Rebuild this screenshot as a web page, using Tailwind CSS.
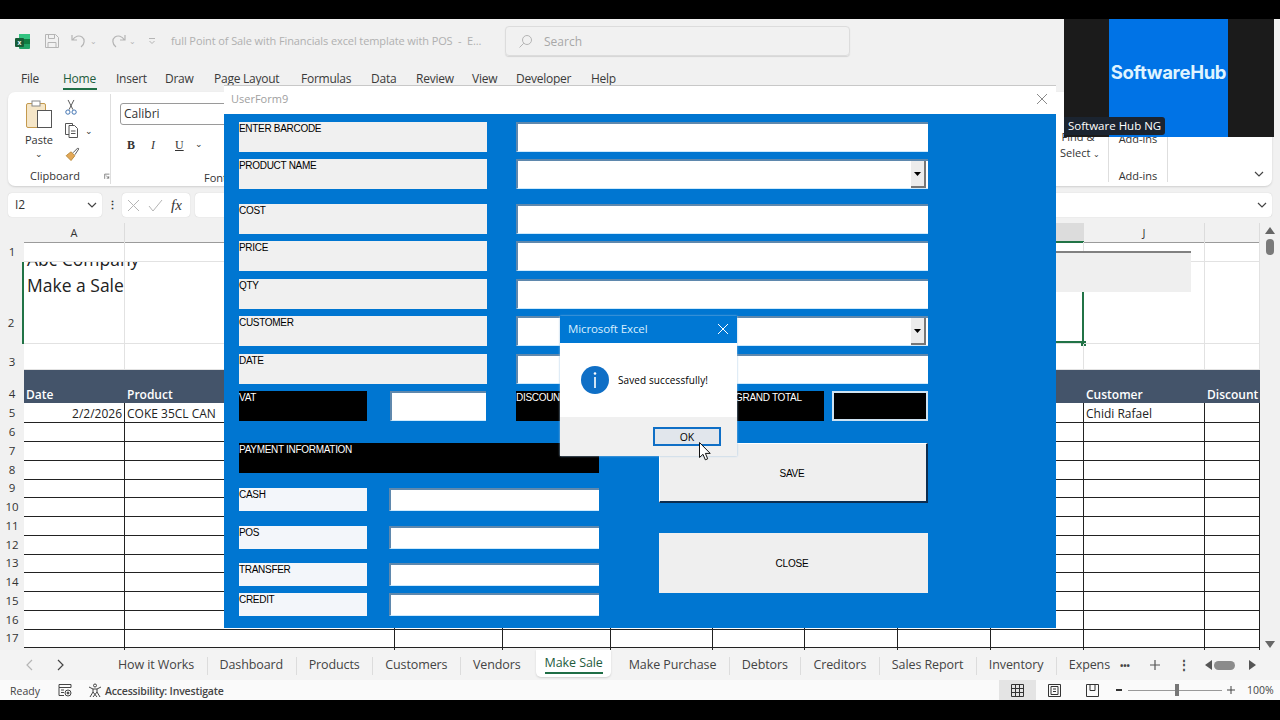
<!DOCTYPE html>
<html lang="en">
<head>
  <meta charset="UTF-8" />
  <title>Make a Sale - Excel</title>
  <script src="https://cdn.jsdelivr.net/npm/@tailwindcss/browser@4"></script>
</head>
<body class="bg-black w-[1280px] h-[720px] overflow-hidden relative font-['Open_Sans',sans-serif] text-[#333]">

  <!-- excel window -->
  <div class="absolute top-[19px] left-0 w-[1280px] h-[681px] bg-[#f1f1f1] flex flex-col">

    <!-- title bar -->
    <div class="h-[41px] flex items-center pl-[14px] pt-[3px] shrink-0">
      <svg class="w-[17px] h-[17px]" viewBox="0 0 17 17"><rect x="5" y="1" width="11" height="15" rx="1" fill="#21a366"/><rect x="5" y="1" width="11" height="5" fill="#33c481"/><rect x="10" y="6" width="6" height="5" fill="#107c41"/><rect x="1" y="5" width="9" height="9" rx="1" fill="#185c37"/><text x="5.5" y="12" font-size="7" font-weight="700" fill="#fff" text-anchor="middle" font-family="Liberation Sans">x</text></svg>
      <svg class="w-[16px] h-[16px] ml-[13px] text-[#b5b5b5]" viewBox="0 0 16 16" fill="none" stroke="currentColor"><path d="M1.5 1.5h10l3 3v10h-13zM4.5 1.5v4h6v-4M4 14.5v-5h8v5"/></svg>
      <svg class="w-[18px] h-[16px] ml-[10px] text-[#b5b5b5]" viewBox="0 0 18 16" fill="none" stroke="currentColor" stroke-width="1.2"><path d="M2 2v5h5M2.5 7C5 3 9 2 12 4c3 2 3 7-1 10"/></svg>
      <span class="text-[8px] ml-[2px] text-[#b5b5b5]">⌄</span>
      <svg class="w-[18px] h-[16px] ml-[12px] text-[#b5b5b5]" viewBox="0 0 18 16" fill="none" stroke="currentColor" stroke-width="1.2"><path d="M16 2v5h-5M15.500 7C13 3 9 2 6 4c-3 2-3 7 1 10"/></svg>
      <span class="text-[8px] ml-[2px] text-[#b5b5b5]">⌄</span>
      <svg class="w-[8px] h-[8px] ml-[12px] text-[#b5b5b5]" viewBox="0 0 8 8" fill="none" stroke="currentColor"><path d="M1 1.500h6M1.500 4l2.500 2.500L6.500 4"/></svg>
      <span class="ml-[15px] w-[330px] text-[11px] text-[#b0b0b0] whitespace-nowrap tracking-[-0.1px]">full Point of Sale with Financials excel template with POS&nbsp; -&nbsp; E...</span>
      <div class="ml-[4px] w-[345px] h-[30px] border border-[#dcdcdc] rounded-[4px] flex items-center pl-[12px] shadow-[0_1px_1px_#d4d4d4]">
        <svg class="w-[15px] h-[15px] text-[#b5b5b5]" viewBox="0 0 15 15" fill="none" stroke="currentColor"><circle cx="9" cy="6" r="4.500"/><path d="M5.800 9.200L1.500 13.500"/></svg>
        <span class="ml-[11px] mt-[1px] text-[12px] text-[#a8a8a8]">Search</span>
      </div>
    </div>

    <!-- menu tabs -->
    <div class="h-[32px] flex pl-[21px] pt-[11px] text-[12px] text-[#3a3a3a] shrink-0 whitespace-nowrap tracking-[-0.25px] leading-[16px]">
      <span class="w-[42px]">File</span>
      <span class="w-[53px] relative text-[#1f5c3d]">Home<span class="absolute left-0 w-[34px] top-[17px] h-[2px] bg-[#1f6e46]"></span></span>
      <span class="w-[49px]">Insert</span><span class="w-[49px]">Draw</span><span class="w-[87px]">Page Layout</span><span class="w-[70px]">Formulas</span><span class="w-[45px]">Data</span><span class="w-[56px]">Review</span><span class="w-[44px]">View</span><span class="w-[75px]">Developer</span><span>Help</span>
    </div>

    <!-- ribbon -->
    <div class="h-[94px] mx-[8px] bg-white rounded-[7px] shadow-[0_1px_2px_#cfcfcf] flex shrink-0 text-[11px] relative">
      <div class="w-[103px] shrink-0 border-r border-[#dedede] my-[2px] flex flex-col">
        <div class="flex h-[68px] pl-[16px] pt-[5px]">
          <div class="flex flex-col items-center w-[30px]">
            <svg class="w-[28px] h-[30px]" viewBox="0 0 28 30" fill="none"><rect x="1.500" y="4.500" width="19" height="24" rx="1.500" fill="#f5e6c8" stroke="#c49a4e"/><rect x="7" y="2" width="8" height="5" fill="#fff" stroke="#888"/><rect x="12.500" y="11.500" width="14" height="17" fill="#fff" stroke="#555"/></svg>
            <span class="text-[11px] mt-[3px]">Paste</span>
            <span class="text-[9px] leading-[9px]">⌄</span>
          </div>
          <div class="flex flex-col ml-[10px] gap-[7px] pt-[0px]">
            <svg class="w-[14px] h-[17px]" viewBox="0 0 14 17" fill="none" stroke="#555"><path d="M4 1l5 10M10 1L5 11"/><circle cx="3.800" cy="13.500" r="2.200" stroke="#3c6fb0"/><circle cx="10.200" cy="13.500" r="2.200" stroke="#3c6fb0"/></svg>
            <div class="flex items-center">
              <svg class="w-[15px] h-[17px]" viewBox="0 0 15 17" fill="none" stroke="#555"><path d="M5 12.500H1.500v-11h7v2"/><path d="M5 3.500h5.500l3 3v9H5zM7 9h4.500M7 11.500h4.500"/></svg>
              <span class="ml-[6px] text-[9px] leading-[9px]">⌄</span>
            </div>
            <svg class="w-[16px] h-[16px]" viewBox="0 0 16 16" fill="none"><path d="M2 10l5-4 4 4-4 5z" fill="#e3a857" stroke="#b98a3e"/><path d="M9 7l5-5 1 1-4 6" stroke="#555"/></svg>
          </div>
        </div>
        <div class="flex items-center pl-[22px] mt-[6px]"><span>Clipboard</span><svg class="w-[9px] h-[9px] ml-[24px]" viewBox="0 0 9 9" fill="none" stroke="#555"><path d="M1 8V1h7M3 3l4 4M7 4v3H4"/></svg></div>
      </div>
      <div class="w-[240px] shrink-0 pl-[9px] pt-[11px] flex flex-col">
        <div class="h-[22px] w-[130px] border border-[#9a9a9a] rounded-[3px] pl-[3px] flex items-center text-[12px]">Calibri</div>
        <div class="flex items-center mt-[11px] pl-[7px] text-[12px] font-['Liberation_Serif']">
          <b class="w-[24px]">B</b><i class="w-[24px]">I</i><span class="underline w-[14px]">U</span><span class="text-[9px] w-[20px] text-center">⌄</span>
        </div>
        <span class="mt-[16px] ml-[84px] text-[11px]">Font</span>
      </div>
      <div class="flex-1"></div>
      <div class="w-[48px] shrink-0 pt-[37px] pr-[12px] text-[11px] leading-[16px] text-center whitespace-nowrap">Find &amp;<br>Select <span class="text-[8px]">⌄</span></div>
      <div class="w-[60px] shrink-0 border-x border-[#dedede] my-[4px] flex flex-col items-center pt-[35px] text-[11px]"><span>Add-ins</span><span class="mt-[20px]">Add-ins</span></div>
      <div class="w-[104px] shrink-0 flex items-end justify-end pr-[8px] pb-[8px]">
        <svg class="w-[10px] h-[7px]" viewBox="0 0 10 7" fill="none" stroke="#444" stroke-width="1.200"><path d="M1 1l4 4 4-4"/></svg>
      </div>
    </div>

    <!-- formula bar -->
    <div class="h-[24px] mt-[7px] mx-[8px] flex shrink-0 text-[12px]">
      <div class="w-[94px] bg-white rounded-[4px] shadow-[0_0_1px_#bdbdbd] flex items-center justify-between pl-[7px] pr-[5px]">
        <span>I2</span><svg class="w-[10px] h-[7px]" viewBox="0 0 10 7" fill="none" stroke="#444" stroke-width="1.200"><path d="M1 1l4 4 4-4"/></svg>
      </div>
      <div class="w-[20px] flex items-center justify-center font-bold text-[11px]">⋮</div>
      <div class="w-[68px] bg-white rounded-[4px] shadow-[0_0_1px_#bdbdbd] flex items-center pl-[5px] gap-[8px]">
        <svg class="w-[13px] h-[13px]" viewBox="0 0 13 13" fill="none" stroke="#b5b5b5"><path d="M1 1l11 11M12 1L1 12"/></svg>
        <svg class="w-[15px] h-[13px]" viewBox="0 0 15 13" fill="none" stroke="#b5b5b5"><path d="M1 7l4 5L14 1"/></svg>
        <span class="font-['Liberation_Serif'] italic text-[15px] leading-[15px]">fx</span>
      </div>
      <div class="flex-1 ml-[5px] bg-white rounded-[4px] shadow-[0_0_1px_#bdbdbd] flex items-center justify-end pr-[5px]">
        <svg class="w-[10px] h-[7px]" viewBox="0 0 10 7" fill="none" stroke="#444" stroke-width="1.200"><path d="M1 1l4 4 4-4"/></svg>
      </div>
    </div>

    <!-- sheet -->
    <div class="h-[427px] mt-[6px] relative shrink-0" id="sheet"></div>

    <!-- sheet tabs -->
    <div class="h-[30px] flex items-center shrink-0 text-[12.500px] text-[#444] tracking-[-0.1px] bg-[#f3f3f3] whitespace-nowrap">
      <div class="w-[100px] flex pl-[25px] gap-[20px] shrink-0">
        <svg class="w-[10px] h-[12px]" viewBox="0 0 10 12" fill="none" stroke="#b5b5b5" stroke-width="1.200"><path d="M7 1L2 6l5 5"/></svg>
        <svg class="w-[10px] h-[12px]" viewBox="0 0 10 12" fill="none" stroke="#444" stroke-width="1.200"><path d="M3 1l5 5-5 5"/></svg>
      </div>
      <div class="flex items-center h-full w-[1015px] overflow-hidden shrink-0 pt-[1px]" id="tabs"></div>
      <div class="flex items-center text-[#444] ml-[5px]">
        <span class="font-bold text-[9px] leading-none">•••</span>
        <svg class="w-[12px] h-[12px] ml-[19px]" viewBox="0 0 12 12" stroke="#555" stroke-width="1.200"><path d="M6 1v10M1 6h10"/></svg>
        <span class="ml-[17px] font-bold text-[12px]">⋮</span>
        <svg class="w-[7px] h-[10px] ml-[15px]" viewBox="0 0 7 10" fill="#555"><path d="M7 0v10L0 5z"/></svg>
        <span class="w-[21px] h-[9px] ml-[2px] rounded-full bg-[#8b8b8b]"></span>
        <svg class="w-[7px] h-[10px] ml-[14px]" viewBox="0 0 7 10" fill="#555"><path d="M0 0v10l7-5z"/></svg>
      </div>
    </div>

    <!-- status bar -->
    <div class="h-[20px] flex items-center shrink-0 bg-[#fafafa] text-[10.500px] text-[#444] leading-[14px]">
      <span class="ml-[10px] mt-[2px]">Ready</span>
      <svg class="w-[14px] h-[14px] ml-[18px]" viewBox="0 0 14 14" fill="none" stroke="#444"><path d="M1 1.500h12v3H1zM1 4.500v8h5M3 7h3M3 9.500h3"/><circle cx="10" cy="10" r="3"/><circle cx="10" cy="10" r="1" fill="#444"/></svg>
      <svg class="w-[14px] h-[15px] ml-[16px]" viewBox="0 0 14 15" fill="none" stroke="#444"><circle cx="7" cy="2.500" r="1.500"/><path d="M1 4l4 2h4l4-2M5 6v3l-3 5M9 6v3l3 5M5 9l4 5M9 9l-4 5"/></svg>
      <span class="ml-[3px] mt-[1px] font-semibold tracking-[-0.17px]">Accessibility: Investigate</span>
      <div class="flex-1"></div>
      <div class="w-[37px] h-full bg-[#e4e4e4] flex items-center justify-center">
        <svg class="w-[13px] h-[13px]" viewBox="0 0 13 13" fill="none" stroke="#333"><path d="M.5.500h12v12H.5zM4.500.500v12M8.500.500v12M.5 4.500h12M.5 8.500h12"/></svg>
      </div>
      <svg class="w-[13px] h-[13px] ml-[12px]" viewBox="0 0 13 13" fill="none" stroke="#333"><path d="M.5.500h12v12H.5zM3 2.500h7v8H3zM5 5h3M5 7.500h3"/></svg>
      <svg class="w-[13px] h-[13px] ml-[25px]" viewBox="0 0 13 13" fill="none" stroke="#333"><path d="M.5.500h12v12H.5zM4 .500v6h5v-6"/></svg>
      <span class="ml-[17px] w-[6px] h-[1.500px] bg-[#333]"></span>
      <div class="relative ml-[6px] w-[94px] h-[1px] bg-[#999]"><span class="absolute left-[47px] -top-[6px] w-[4px] h-[12px] bg-[#777]"></span></div>
      <svg class="w-[8px] h-[8px] ml-[5px]" viewBox="0 0 8 8" stroke="#444"><path d="M4 0v8M0 4h8"/></svg>
      <span class="ml-[12px] mr-[7px] text-[10.500px] w-[26px]">100%</span>
    </div>
  </div>

  <!-- webcam overlay -->
  <div class="absolute left-[1064px] top-[19px] w-[210px] h-[118px] bg-[#1b1b1b] flex justify-center">
    <div class="ml-[-1px] w-[119px] h-full bg-[#0073e6] flex items-center justify-center"><span class="text-[18.500px] font-bold text-[#dff3ff] font-['Inter',sans-serif] tracking-[-0.3px] mt-[-10px] whitespace-nowrap">SoftwareHub</span></div>
    <span class="absolute left-0 top-[98px] h-[18px] px-[4px] bg-[#1b2430] rounded-r-[3px] text-white text-[11.500px] leading-[18px] whitespace-nowrap">Software Hub NG</span>
  </div>

  <!-- userform -->
  <div class="absolute left-[224px] top-[85px] w-[832px] h-[543px] bg-[#0076d1] flex flex-col font-['Liberation_Sans',sans-serif] text-[10px] tracking-[-0.3px] text-black">
    <div class="h-[29px] bg-white border-t border-[#c8c8c8] flex items-center justify-between pl-[7px] pr-[8px] pb-[2px] shrink-0">
      <span class="text-[11px] text-[#a0a0a0] font-['Open_Sans',sans-serif] tracking-normal">UserForm9</span>
      <svg class="w-[12px] h-[12px]" viewBox="0 0 12 12" stroke="#8a8a8a"><path d="M1 1l10 10M11 1L1 11"/></svg>
    </div>
    <div class="flex-1 pl-[15px] pt-[8px] flex flex-col">
      <div class="flex h-[30px] gap-[29px]">
        <div class="w-[248px] bg-[#f0f0f0] leading-[13px]">ENTER BARCODE</div>
        <div class="w-[412px] bg-white border-t-2 border-l-2 border-[#5f88ad] border-b border-b-[#cfeafc]"></div>
      </div>
      <div class="flex h-[30px] gap-[29px] mt-[7px]">
        <div class="w-[248px] bg-[#f0f0f0] leading-[13px]">PRODUCT NAME</div>
        <div class="w-[412px] bg-white border-t-2 border-l-2 border-[#5f88ad] border-b border-b-[#cfeafc] flex justify-end pr-[2px]">
          <div class="w-[15px] h-[27px] bg-[#ececec] border-r-2 border-b-2 border-[#777] flex items-center justify-center"><svg class="w-[7px] h-[4px]" viewBox="0 0 7 4"><path d="M0 0h7L3.500 4z"/></svg></div>
        </div>
      </div>
      <div class="flex h-[30px] gap-[29px] mt-[15px]">
        <div class="w-[248px] bg-[#f0f0f0] leading-[13px]">COST</div>
        <div class="w-[412px] bg-white border-t-2 border-l-2 border-[#5f88ad] border-b border-b-[#cfeafc]"></div>
      </div>
      <div class="flex h-[30px] gap-[29px] mt-[7px]">
        <div class="w-[248px] bg-[#f0f0f0] leading-[13px]">PRICE</div>
        <div class="w-[412px] bg-white border-t-2 border-l-2 border-[#5f88ad] border-b border-b-[#cfeafc]"></div>
      </div>
      <div class="flex h-[30px] gap-[29px] mt-[8px]">
        <div class="w-[248px] bg-[#f0f0f0] leading-[13px]">QTY</div>
        <div class="w-[412px] bg-white border-t-2 border-l-2 border-[#5f88ad] border-b border-b-[#cfeafc]"></div>
      </div>
      <div class="flex h-[30px] gap-[29px] mt-[7px]">
        <div class="w-[248px] bg-[#f0f0f0] leading-[13px]">CUSTOMER</div>
        <div class="w-[412px] bg-white border-t-2 border-l-2 border-[#5f88ad] border-b border-b-[#cfeafc] flex justify-end pr-[2px]">
          <div class="w-[15px] h-[27px] bg-[#ececec] border-r-2 border-b-2 border-[#777] flex items-center justify-center"><svg class="w-[7px] h-[4px]" viewBox="0 0 7 4"><path d="M0 0h7L3.500 4z"/></svg></div>
        </div>
      </div>
      <div class="flex h-[30px] gap-[29px] mt-[8px]">
        <div class="w-[248px] bg-[#f0f0f0] leading-[13px]">DATE</div>
        <div class="w-[412px] bg-white border-t-2 border-l-2 border-[#5f88ad] border-b border-b-[#cfeafc]"></div>
      </div>

      <!-- vat row -->
      <div class="flex h-[30px] mt-[7px] text-white">
        <div class="w-[128px] bg-black leading-[13px]">VAT</div>
        <div class="w-[96px] ml-[23px] bg-white border-t-2 border-l-2 border-[#5f88ad] border-b border-b-[#cfeafc]"></div>
        <div class="w-[144px] ml-[30px] bg-black leading-[13px]">DISCOUNT</div>
        <div class="w-[172px] ml-[-8px] bg-black leading-[13px] pl-[83px] whitespace-nowrap">GRAND TOTAL</div>
        <div class="w-[96px] ml-[8px] bg-black border-2 border-[#cfe3f2]"></div>
      </div>

      <!-- payment + buttons -->
      <div class="flex mt-[22px]">
        <div class="w-[360px] flex flex-col">
          <div class="h-[30px] bg-black text-white leading-[13px]">PAYMENT INFORMATION</div>
          <div class="flex h-[23px] mt-[15px]">
            <div class="w-[128px] bg-[#f3f6fa] leading-[13px]">CASH</div>
            <div class="w-[210px] ml-[22px] bg-white border-t-2 border-l-2 border-[#5f88ad] border-b border-b-[#cfeafc]"></div>
          </div>
          <div class="flex h-[23px] mt-[15px]">
            <div class="w-[128px] bg-[#f3f6fa] leading-[13px]">POS</div>
            <div class="w-[210px] ml-[22px] bg-white border-t-2 border-l-2 border-[#5f88ad] border-b border-b-[#cfeafc]"></div>
          </div>
          <div class="flex h-[23px] mt-[14px]">
            <div class="w-[128px] bg-[#f3f6fa] leading-[13px]">TRANSFER</div>
            <div class="w-[210px] ml-[22px] bg-white border-t-2 border-l-2 border-[#5f88ad] border-b border-b-[#cfeafc]"></div>
          </div>
          <div class="flex h-[23px] mt-[7px]">
            <div class="w-[128px] bg-[#f3f6fa] leading-[13px]">CREDIT</div>
            <div class="w-[210px] ml-[22px] bg-white border-t-2 border-l-2 border-[#5f88ad] border-b border-b-[#cfeafc]"></div>
          </div>
        </div>
        <div class="w-[269px] ml-[60px] flex flex-col">
          <button class="h-[60px] pt-[2px] pr-[2px] bg-[#efefef] border-t border-l border-white border-r-2 border-b-2 border-r-[#0c2d50] border-b-[#0c2d50] text-[10px] tracking-[-0.2px]">SAVE</button>
          <button class="h-[60px] mt-[30px] pr-[3px] bg-[#efefef] text-[10px] tracking-[-0.2px]">CLOSE</button>
        </div>
      </div>
    </div>
  </div>

  <!-- message box -->
  <div class="absolute left-[560px] top-[316px] w-[177px] h-[140px] bg-[#f0f0f0] flex flex-col shadow-[0_0_2px_#9fc4e4]">
    <div class="h-[27px] bg-[#0078d4] flex items-center justify-between pl-[8px] pr-[9px] pb-[2px] shrink-0">
      <span class="text-[11.500px] text-[#d8efff] tracking-[-0.1px]">Microsoft Excel</span>
      <svg class="w-[10px] h-[10px]" viewBox="0 0 10 10" stroke="#fff"><path d="M0 0l10 10M10 0L0 10"/></svg>
    </div>
    <div class="h-[74px] bg-white flex items-center pl-[21px] pb-[1px] shrink-0">
      <svg class="w-[28px] h-[28px]" viewBox="0 0 28 28"><circle cx="14" cy="14" r="14" fill="#0f6fc6"/><circle cx="14" cy="7.500" r="1.300" fill="#fff"/><rect x="13.200" y="11" width="1.600" height="11" fill="#fff"/></svg>
      <span class="ml-[9px] mt-[2px] text-[10px] tracking-[0.1px] text-black">Saved successfully!</span>
    </div>
    <div class="flex justify-end pr-[16px] pt-[10px]">
      <button class="w-[68px] h-[19px] bg-[#e1e6ec] border-2 border-[#0f6fc6] text-[10.500px] leading-[14px] text-black">OK</button>
    </div>
  </div>

  <!-- cursor -->
  <svg class="absolute left-[699px] top-[442px] w-[12px] h-[19px]" viewBox="0 0 12 19"><path d="M.5.500v15l3.500-3.200 2.300 5.500 2.400-1-2.300-5.400h4.800z" fill="#fff" stroke="#111"/></svg>

  <script>
    // sheet grid: columns A..K and row heights taken from the worksheet
    const cols = "grid grid-cols-[24px_101px_270px_108px_108px_102px_92px_93px_93px_93px_121px_55px] w-[1260px]";
    const n = 11;
    let html = "";

    // column letters
    html += `<div class="${cols} h-[19px] text-[11px] text-[#333]"><div></div>`;
    for (let c = 0; c < n; c++) {
      const letter = c === 0 ? "A" : c === 9 ? "J" : "";
      const on = c === 8 ? "bg-[#dcdcdc] border-b-2 border-[#217346]" : "border-b border-[#9b9b9b] border-r border-r-[#dcdcdc]";
      html += `<div class="${on} text-center leading-[19px]">${letter}</div>`;
    }
    html += `</div>`;

    // rows 1-3, light gridlines
    [[1, "h-[20px]", "items-center"], [2, "h-[81.5px]", "items-end pb-[12px] bg-[#dcdcdc] border-r-2 border-[#217346]"], [3, "h-[26.5px]", "items-end"]].forEach(([num, h, head]) => {
      html += `<div class="${cols} ${h} bg-white"><div class="bg-[#f1f1f1] ${head} text-[11.500px] text-center flex justify-center">${num}</div>`;
      for (let c = 0; c < n; c++) {
        html += `<div class="border-r border-b border-[#e2e2e2] relative">`;
        if (num === 2 && c === 0) {
          html += `<div class="absolute inset-x-0 top-0 h-full overflow-visible whitespace-nowrap"><div class="h-[82px] overflow-hidden pl-[3px] text-[17.500px] leading-[26px] text-[#222] w-[190px]"><div class="-mt-[16px]">Abc Company</div><div>Make a Sale</div></div></div>`;
        }
        if (num === 2 && c === 8) {
          html += `<div class="absolute inset-y-0 left-0 -right-[1px] border-r-2 border-b-2 border-[#217346]"></div><span class="absolute right-[-3px] bottom-[-3px] w-[5px] h-[5px] bg-[#217346]"></span>`;
        }
        html += `</div>`;
      }
      html += `</div>`;
    });

    // table header row
    const header = { 0: "Date", 1: "Product", 9: "Customer", 10: "Discount" };
    html += `<div class="${cols} h-[33.25px] bg-[#44546a]"><div class="bg-[#f1f1f1] text-[11.500px] text-center flex items-end justify-center pb-[1px]">4</div>`;
    for (let c = 0; c < n; c++) {
      html += `<div class="flex items-end pl-[2px] text-white font-semibold text-[12px] leading-[16px] whitespace-nowrap">${header[c] || ""}</div>`;
    }
    html += `</div>`;

    // body rows 5-17
    const values = { 0: "2/2/2026", 1: "COKE 35CL CAN", 9: "Chidi Rafael" };
    for (let r = 5; r <= 17; r++) {
      html += `<div class="${cols} h-[18.75px] bg-white"><div class="bg-[#f1f1f1] text-[11.500px] text-center leading-[20px]">${r}</div>`;
      for (let c = 0; c < n; c++) {
        const align = c === 0 ? "text-right pr-[2px]" : "pl-[2px]";
        html += `<div class="border-b border-r border-[#222] ${align} text-[12px] leading-[22px] text-[#222] whitespace-nowrap overflow-hidden">${r === 5 && values[c] ? values[c] : ""}</div>`;
      }
      html += `</div>`;
    }

    // stub of the next row
    html += `<div class="${cols} h-[3px] bg-[#f1f1f1]"><div></div>`;
    for (let c = 0; c < n; c++) html += `<div class="border-r border-[#222]"></div>`;
    html += `</div>`;

    // scrollbar, filter shape
    html += `<div class="absolute left-[1056px] top-[28px] w-[135px] h-[41px] bg-[#efefef] border-t-2 border-[#808080]"></div>`;
    html += `<svg class="absolute left-[1265px] top-[4px] w-[10px] h-[7px]" viewBox="0 0 10 7" fill="#666"><path d="M5 0l5 7H0z"/></svg>`;
    html += `<span class="absolute left-[1266px] top-[16px] w-[8px] h-[16px] rounded-full bg-[#7a7a7a]"></span>`;
    html += `<svg class="absolute left-[1265px] top-[418px] w-[10px] h-[7px]" viewBox="0 0 10 7" fill="#666"><path d="M5 7l5-7H0z"/></svg>`;
    document.getElementById("sheet").innerHTML = html;

    // sheet tabs
    const tabs = ["How it Works", "Dashboard", "Products", "Customers", "Vendors", "Make Sale", "Make Purchase", "Debtors", "Creditors", "Sales Report", "Inventory", "Expens"];
    document.getElementById("tabs").innerHTML = tabs.map(t => {
      if (t === "Make Sale") {
        return `<div class="h-[27px] mb-[4px] ml-[3px] mr-[5.500px] px-[8.500px] bg-white rounded-b-[5px] shadow-[0_1px_2px_#d0d0d0] flex items-center relative text-[#1f5c3d]">${t}<span class="absolute left-[8.500px] right-[8.500px] bottom-[3px] h-[2px] bg-[#1f6e46]"></span></div>`;
      }
      if (t === "How it Works") return `<div class="h-[18px] ml-[5.500px] px-[12.500px] flex items-center">${t}</div>`;
      if (t === "Make Purchase") return `<div class="h-[18px] pl-[12px] pr-[12.500px] flex items-center">${t}</div>`;
      return `<div class="h-[18px] pl-[12px] pr-[12.500px] flex items-center border-l border-[#dcdcdc]">${t}</div>`;
    }).join("");
  </script>
</body>
</html>
